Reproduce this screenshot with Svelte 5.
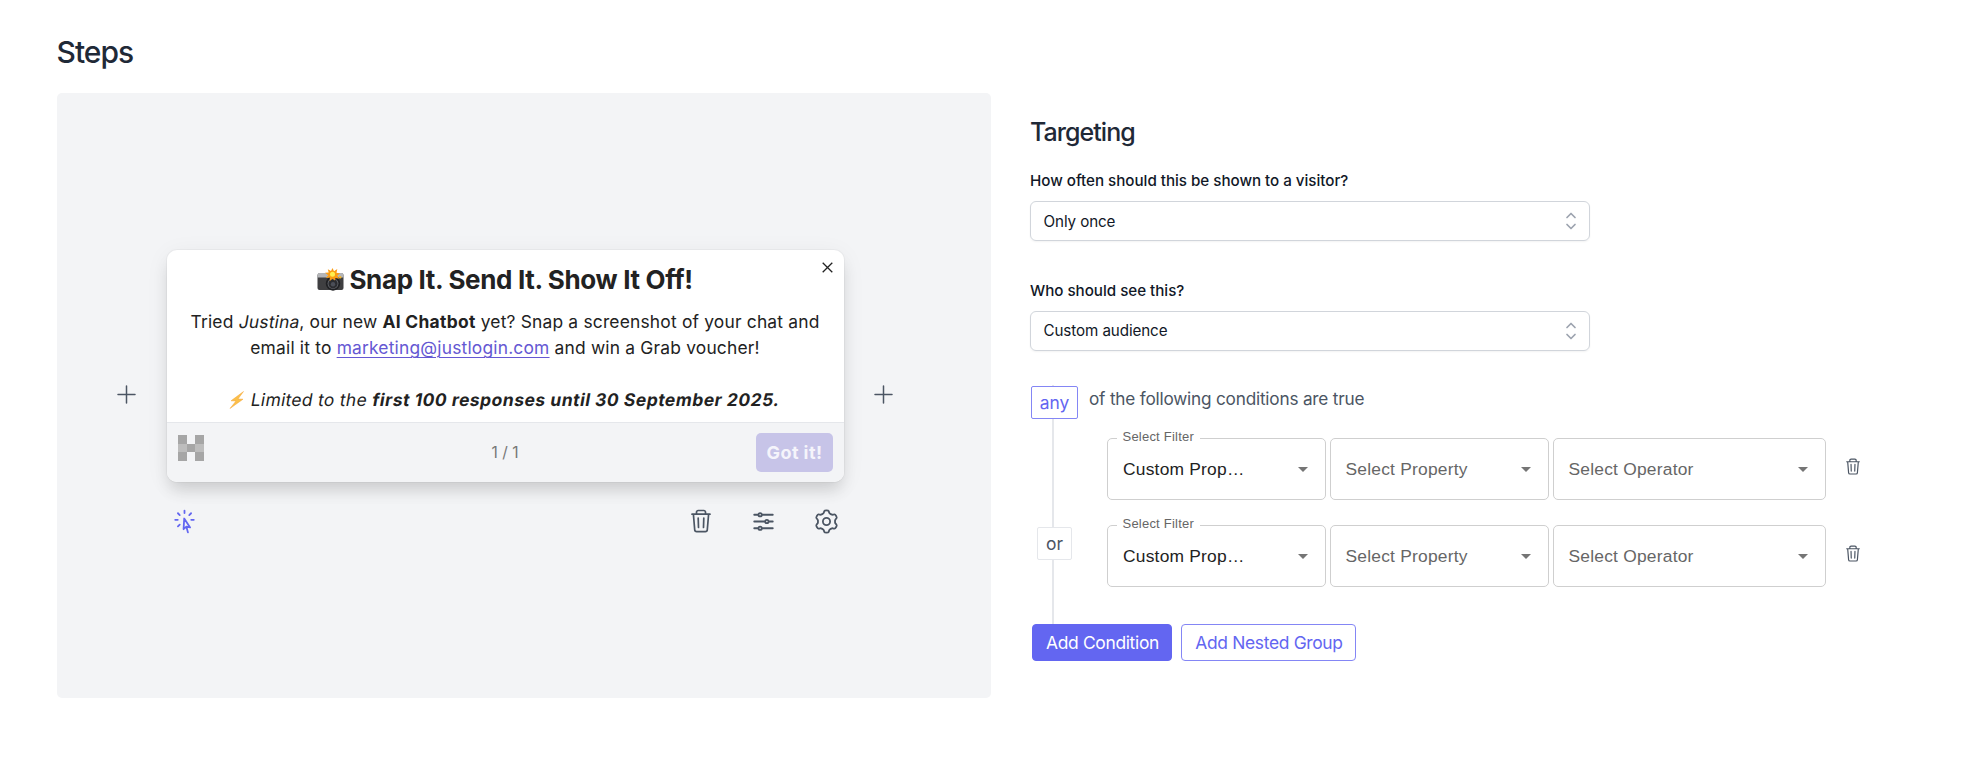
<script>
  const conditions = [
    { filter: "Custom Prop…" },
    { filter: "Custom Prop…" },
  ];

  const selects = [
    { label: "How often should this be shown to a visitor?", value: "Only once" },
    { label: "Who should see this?", value: "Custom audience" },
  ];

  // six rounded teeth around the centre of a 24x24 box
  function gearPath() {
    const tooth = [[-3.2, -6.9], [-2.5, -7.5], [-2.2, -8.5], [-1.7, -9.9], [1.7, -9.9], [2.2, -8.5], [2.5, -7.5], [3.2, -6.9]];
    const points = [];
    for (let k = 0; k < 6; k++) {
      const a = (k * Math.PI) / 3;
      for (const [x, y] of tooth) {
        points.push([12 + x * Math.cos(a) - y * Math.sin(a), 12 + x * Math.sin(a) + y * Math.cos(a)]);
      }
    }
    const mid = (p, q) => `${((p[0] + q[0]) / 2).toFixed(2)} ${((p[1] + q[1]) / 2).toFixed(2)}`;
    let d = `M${mid(points[points.length - 1], points[0])}`;
    points.forEach((p, i) => {
      d += `Q${p[0].toFixed(2)} ${p[1].toFixed(2)} ${mid(p, points[(i + 1) % points.length])}`;
    });
    return d + "Z";
  }
</script>

<style>
  :global(body) {
    margin: 0;
    background: #fff;
    font-family: Inter, "Liberation Sans", sans-serif;
  }
  .page {
    box-sizing: border-box;
    width: 1966px;
    height: 768px;
    padding: 32px 57px 0;
    color: #1f2937;
    overflow: hidden;
  }
  h1, h2, h3, p {
    margin: 0;
    font-weight: 400;
  }
  button {
    font-family: inherit;
    margin: 0;
    cursor: pointer;
  }
  svg {
    display: block;
    flex: none;
  }
  h1 {
    height: 61px;
    font-size: 30px;
    line-height: 40px;
    font-weight: 500;
    letter-spacing: -1px;
    text-indent: -0.5px;
  }
  .columns {
    display: grid;
    grid-template-columns: 934px 1fr;
    column-gap: 39px;
  }

  /* preview */
  .preview {
    box-sizing: border-box;
    height: 605px;
    padding: 157px 0 0 60px;
    background: #f3f4f6;
    border-radius: 5px;
  }
  .slide-row {
    display: flex;
    align-items: center;
    gap: 30.5px;
  }
  .add {
    display: flex;
    padding: 0;
    border: 0;
    background: none;
    color: #4b5563;
    margin-top: 57px;
  }
  .card {
    box-sizing: border-box;
    width: 677px;
    height: 232px;
    border-radius: 10px;
    background: #fff;
    box-shadow: 0 0 0 1px rgba(0, 0, 0, 0.03), 0 11px 16px -3px rgba(0, 0, 0, 0.13), 0 4px 24px rgba(0, 0, 0, 0.06);
    color: #222;
    overflow: hidden;
    position: relative;
  }
  .close {
    position: absolute;
    top: 12px;
    right: 11px;
    color: #222;
  }
  .content {
    height: 172px;
    box-sizing: border-box;
    padding-top: 14px;
    text-align: center;
  }
  h3 {
    display: flex;
    align-items: center;
    justify-content: center;
    gap: 5px;
    height: 32px;
    font-size: 26px;
    font-weight: 700;
    line-height: 32px;
    letter-spacing: -0.34px;
  }
  .content p {
    font-size: 17.4px;
    line-height: 26px;
    letter-spacing: 0.19px;
  }
  .content b {
    letter-spacing: 0.3px;
  }
  .content p.first {
    margin-top: 13px;
  }
  .content p.note {
    display: flex;
    justify-content: center;
    margin-top: 26px;
    gap: 6px;
    align-items: center;
    letter-spacing: 0.33px;
  }
  .content .note b {
    letter-spacing: 0.54px;
  }
  .slant {
    display: inline-block;
    font-style: normal;
    transform: skewX(-10deg);
  }
  .content a {
    color: #6558d3;
    text-underline-offset: 3px;
    text-decoration-thickness: 1.4px;
  }
  .footer {
    box-sizing: border-box;
    height: 60px;
    padding: 10px 11px;
    border-top: 1px solid #e5e7eb;
    background: #f3f4f6;
    display: grid;
    grid-template-columns: 1fr auto 1fr;
  }
  .count {
    align-self: center;
    font-size: 15.5px;
    color: #777;
  }
  .got {
    justify-self: end;
    width: 77px;
    height: 39px;
    padding: 0 0 0 1px;
    border: 0;
    border-radius: 5px;
    background: #c7c4e8;
    color: #f5f4fb;
    font-size: 18px;
    font-weight: 700;
    letter-spacing: 0.4px;
  }
  .tools {
    display: flex;
    align-items: center;
    width: 677px;
    margin: 25.5px 0 0 50px;
    color: #4b5563;
  }
  .tools button {
    display: flex;
    padding: 0;
    border: 0;
    background: none;
    color: inherit;
  }
  .tools .pick {
    color: #6366f1;
    margin: 0 auto 0 4px;
  }
  .tools .tool {
    margin-left: 36px;
  }
  .tools .delete {
    margin-right: 3.5px;
  }
  .tools .tool:last-child {
    margin-right: 4px;
  }

  /* targeting */
  .targeting {
    padding-top: 22px;
  }
  h2 {
    font-size: 25px;
    font-weight: 500;
    line-height: 34px;
    letter-spacing: -0.95px;
    margin-bottom: 20px;
  }
  .field {
    height: 109.5px;
    font-size: 15.2px;
  }
  .label {
    display: block;
    height: 32px;
    line-height: 23px;
    font-weight: 500;
    letter-spacing: -0.03px;
    color: #111827;
  }
  .select {
    box-sizing: border-box;
    display: flex;
    align-items: center;
    justify-content: space-between;
    width: 560px;
    height: 40px;
    padding: 0 10.5px 0 12.5px;
    border: 1px solid #d1d5db;
    border-radius: 6px;
    box-shadow: 0 1px 2px rgba(0, 0, 0, 0.05);
    letter-spacing: -0.1px;
    color: #111827;
  }
  .rules {
    height: 239px;
    margin-top: -3px;
    box-sizing: border-box;
    background: linear-gradient(#e5e7eb, #e5e7eb) 22px 0 / 2px 239px no-repeat;
    font-size: 17.4px;
    color: #4b5563;
  }
  .rules-head {
    display: flex;
    align-items: flex-start;
    height: 53px;
    padding-top: 1px;
    box-sizing: border-box;
  }
  .any, .or {
    box-sizing: border-box;
    display: flex;
    justify-content: center;
    align-items: center;
    background: #fff;
    border: 1px solid #e5e7eb;
    border-radius: 2px;
    height: 33px;
  }
  .any {
    width: 47px;
    border-color: #8486f5;
    color: #6366f1;
    margin: 0 11px 0 1px;
  }
  .rules-head p {
    font-size: 17.2px;
    line-height: 26px;
    letter-spacing: -0.2px;
  }
  .rule {
    display: grid;
    grid-template-columns: 73px 219px 219px 273px auto;
    column-gap: 4px;
    height: 62px;
    margin-bottom: 25px;
    font-family: "Liberation Sans", Arial, sans-serif;
    letter-spacing: 0.22px;
  }
  .or {
    width: 35px;
    margin: 2px 0 0 7px;
    font-family: Inter, sans-serif;
    letter-spacing: 0;
  }
  .box {
    position: relative;
    box-sizing: border-box;
    display: flex;
    align-items: center;
    justify-content: space-between;
    padding: 0 17px 0 14.5px;
    border: 1px solid #cfcfcf;
    border-radius: 5px;
    color: #666;
  }
  .box.filled {
    color: #222;
    padding-left: 15px;
  }
  .legend {
    position: absolute;
    top: -11px;
    left: 9px;
    padding: 0 6px 0 5.5px;
    background: #fff;
    font-size: 13px;
    line-height: 18px;
    color: #666;
  }
  .arrow {
    border: 5.5px solid transparent;
    border-top-color: #757575;
    border-bottom: 0;
  }
  .remove {
    margin: 20px 0 0 15.5px;
    color: #4b5563;
  }
  .actions {
    display: flex;
    gap: 9px;
    padding-left: 2px;
  }
  .actions button {
    box-sizing: border-box;
    height: 37px;
    padding: 0 0 0 1px;
    border-radius: 4px;
    border: 1px solid #8486f5;
    background: #fff;
    color: #6366f1;
    font-size: 17.4px;
    letter-spacing: -0.32px;
  }
  .actions .primary {
    width: 140px;
    border-color: #6366f1;
    background: #6366f1;
    color: #fff;
  }
  .actions .nested {
    width: 175px;
  }
</style>

{#snippet plus()}
  <svg width="19" height="19" viewBox="0 0 19 19" fill="none" stroke="currentColor" stroke-width="1.5" stroke-linecap="round">
    <path d="M9.5 1v17M1 9.5h17" />
  </svg>
{/snippet}

{#snippet trash(width, height)}
  <svg {width} {height} viewBox="0 0 20 24" fill="none" stroke="currentColor" stroke-width="1.7" stroke-linecap="round" stroke-linejoin="round">
    <path d="M1 5.2h18M2.4 5.2 3.7 20.8a2 2 0 0 0 2 1.9h8.6a2 2 0 0 0 2-1.9L17.6 5.2M5.5 5V3.2A1.7 1.7 0 0 1 7.2 1.5h5.6A1.7 1.7 0 0 1 14.5 3.2V5M7.2 9l.3 9.5M12.8 9l-.3 9.5" />
  </svg>
{/snippet}

<div class="page">
  <h1>Steps</h1>
  <div class="columns">
    <section class="preview">
      <div class="slide-row">
        <button class="add" aria-label="Add before">{@render plus()}</button>
        <div class="card">
          <svg class="close" width="11" height="11" viewBox="0 0 11 11" fill="none" stroke="currentColor" stroke-width="1.3">
            <path d="M.7.7l9.6 9.6M10.3.7.7 10.3" />
          </svg>
          <div class="content">
            <h3>
              <svg width="27" height="24" viewBox="0 0 27 24">
                <path d="M.5 7.5Q.5 5 3 5h21q2.5 0 2.5 2.5V20q0 2-2 2h-22q-2 0-2-2z" fill="#3f3f41" />
                <path d="M.5 9.5V7q0-2 2-2h22q2 0 2 2v2.5z" fill="#b4b5b8" />
                <circle cx="16" cy="15.5" r="7.2" fill="#202124" />
                <circle cx="16" cy="15.5" r="5.4" fill="#66686e" />
                <circle cx="16" cy="15.8" r="4.6" fill="#2b2c30" />
                <circle cx="16" cy="16.3" r="2.2" fill="#4b4e57" />
                <path d="M15.5 0l1.5 3.3L20.3 1l-.8 3.8 3.7.6-3 2.2 2 3.1-3.8-.8-.5 2.6-2.4-1.7-2.7 2.3V9.600l-4 .4 2.500-2.700L8 4.800l3.700-.2L10.800 1.200 14 3z" fill="#fb9c12" />
                <circle cx="15.5" cy="6.3" r="2.5" fill="#fff04f" />
                <circle cx="23.2" cy="9.2" r="1.2" fill="#f5b52b" />
              </svg>
              <span>Snap It. Send It. Show It Off!</span>
            </h3>
            <p class="first">Tried <em class="slant">Justina</em>, our new <b>AI Chatbot</b> yet? Snap a screenshot of your chat and</p>
            <p>email it to <a href="mailto:marketing@justlogin.com">marketing@justlogin.com</a> and win a Grab voucher!</p>
            <p class="note">
              <svg width="16" height="18" viewBox="0 0 16 18">
                <path d="M14.5.5 2 9.8l5 .2L1 17.5 14 8.2l-5-.2z" fill="#fbc04a" stroke="#f4a63a" stroke-width=".5" />
              </svg>
              <em class="slant">Limited to the <b>first 100 responses until 30 September 2025.</b></em>
            </p>
          </div>
          <div class="footer">
            <svg width="26" height="28" viewBox="0 -2 26 28" shape-rendering="crispEdges">
              <path d="M0 0h9v26H0zM17 0h9v26h-9zM9 9h8v8H9z" fill="#a6a6a6" />
              <path d="M0 9h9v8H0zM17 9h9v8h-9z" fill="#bdbdbd" />
            </svg>
            <span class="count">1 / 1</span>
            <button class="got">Got it!</button>
          </div>
        </div>
        <button class="add" aria-label="Add after">{@render plus()}</button>
      </div>
      <div class="tools">
        <button class="pick" aria-label="Trigger">
          <svg width="27" height="27" viewBox="0 0 24 24" fill="none" stroke="currentColor" stroke-width="1.6" stroke-linecap="round" stroke-linejoin="round">
            <path d="M15.042 21.672 13.684 16.6m0 0-2.51 2.225.569-9.47 5.227 7.917-3.286-.672ZM12 2.25V4.5m5.834.166-1.591 1.591M20.25 10.5H18M7.757 14.743l-1.59 1.59M6 10.5H3.75m4.007-4.243-1.59-1.59" />
          </svg>
        </button>
        <button class="tool delete" aria-label="Delete">{@render trash(20, 24)}</button>
        <button class="tool" aria-label="Adjust">
          <svg width="27" height="27" viewBox="0 0 24 24" fill="none" stroke="currentColor" stroke-width="1.6" stroke-linecap="round" stroke-linejoin="round">
            <path d="M10.5 6h9.75M10.5 6a1.5 1.5 0 1 1-3 0m3 0a1.5 1.5 0 1 0-3 0M3.75 6H7.5m3 12h9.75m-9.75 0a1.5 1.5 0 0 1-3 0m3 0a1.5 1.5 0 0 0-3 0m-3.75 0H7.5m9-6h3.75m-3.75 0a1.5 1.5 0 0 1-3 0m3 0a1.5 1.5 0 0 0-3 0m-9.75 0h9.75" />
          </svg>
        </button>
        <button class="tool" aria-label="Settings">
          <svg width="27" height="27" viewBox="0 0 24 24" fill="none" stroke="currentColor" stroke-width="1.6" stroke-linejoin="round">
            <path d={gearPath()} />
            <circle cx="12" cy="12" r="3.2" />
          </svg>
        </button>
      </div>
    </section>

    <section class="targeting">
      <h2>Targeting</h2>
      {#each selects as { label, value }}
        <div class="field">
          <span class="label">{label}</span>
          <div class="select">
            <span>{value}</span>
            <svg width="16" height="20" viewBox="0 0 16 20" fill="none" stroke="#9ca3af" stroke-width="1.7" stroke-linecap="round" stroke-linejoin="round">
              <path d="M4 6.5l4-4 4 4M4 13.5l4 4 4-4" />
            </svg>
          </div>
        </div>
      {/each}

      <div class="rules">
        <div class="rules-head">
          <span class="any">any</span>
          <p>of the following conditions are true</p>
        </div>
        {#each conditions as { filter }, i}
          <div class="rule">
            <div>{#if i > 0}<div class="or">or</div>{/if}</div>
            <div class="box filled">
              <span class="legend">Select Filter</span>
              <span>{filter}</span><i class="arrow"></i>
            </div>
            <div class="box"><span>Select Property</span><i class="arrow"></i></div>
            <div class="box"><span>Select Operator</span><i class="arrow"></i></div>
            <div class="remove">{@render trash(14, 17)}</div>
          </div>
        {/each}
      </div>
      <div class="actions">
        <button class="primary">Add Condition</button>
        <button class="nested">Add Nested Group</button>
      </div>
    </section>
  </div>
</div>
